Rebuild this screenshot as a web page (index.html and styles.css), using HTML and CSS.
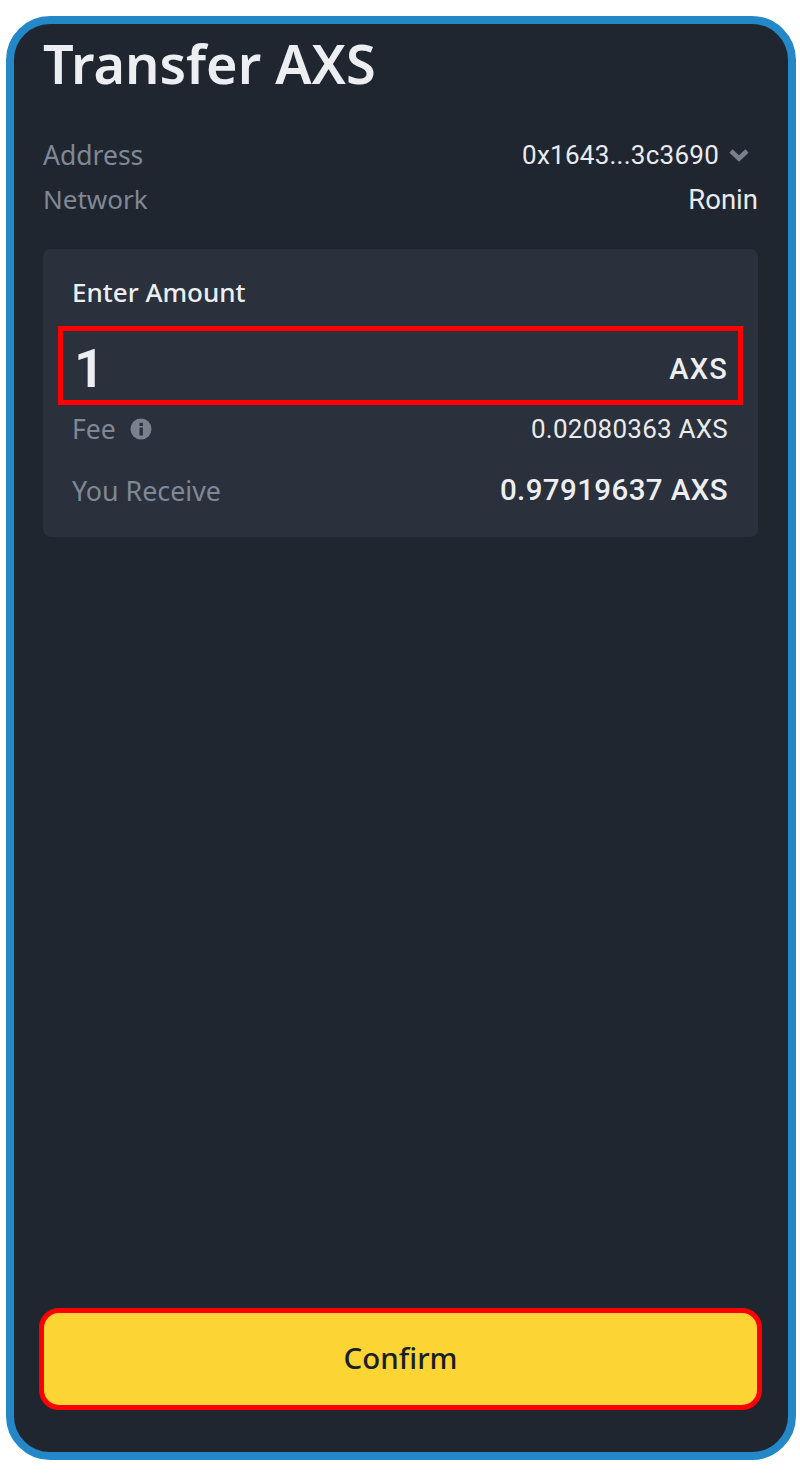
FILE: index.html
```html
<!DOCTYPE html>
<html lang="en">
<head>
    <meta charset="UTF-8">
    <meta name="viewport" content="width=device-width, initial-scale=1.0">
    <title>Transfer AXS</title>
    <link rel="stylesheet" href="styles.css">
</head>
<body>
    <div class="phone">
        <h1 class="title">Transfer AXS</h1>

        <!-- address and network -->
        <div class="info">
            <div class="info-row">
                <span class="label">Address</span>
                <span class="value address">0x1643...3c3690
                    <svg class="chevron" viewBox="0 0 20 14" width="20" height="14">
                        <path d="M2 3 L10 10.5 L18 3" fill="none" stroke="#79818f" stroke-width="4.6"/>
                    </svg>
                </span>
            </div>
            <div class="info-row">
                <span class="label network-label">Network</span>
                <span class="value network">Ronin</span>
            </div>
        </div>

        <!-- amount card -->
        <div class="card">
            <div class="card-title">Enter Amount</div>
            <div class="amount-box">
                <span class="amount">1</span>
                <span class="unit">AXS</span>
            </div>
            <div class="fee-row">
                <span class="label fee-label">Fee
                    <svg class="info-icon" viewBox="0 0 22 22" width="22" height="22">
                        <circle cx="11" cy="11" r="10.5" fill="#79818f"/>
                        <rect x="9.5" y="9.5" width="3.4" height="8" fill="#2a313c"/>
                        <rect x="9.5" y="4.8" width="3.4" height="3.2" fill="#2a313c"/>
                    </svg>
                </span>
                <span class="value">0.02080363 AXS</span>
            </div>
            <div class="receive-row">
                <span class="label receive-label">You Receive</span>
                <span class="receive">0.97919637 AXS</span>
            </div>
        </div>

        <button class="confirm">Confirm</button>
    </div>
</body>
</html>
```

FILE: styles.css
```css
* {
    margin: 0;
    padding: 0;
    box-sizing: border-box;
}

body {
    background: #fff;
    font-family: "Noto Sans", "Liberation Sans", sans-serif;
    height: 1474px;
    overflow: hidden;
    padding: 16px 4px 14px 6px;
}

.phone {
    display: flex;
    flex-direction: column;
    height: 100%;
    background: #1f2630;
    border: 8px solid #2487c7;
    border-radius: 44px;
    padding: 0 30px 42px 29px;
}

.title {
    color: #eceef2;
    font-size: 54px;
    font-weight: 600;
    line-height: 70px;
    margin-top: 4px;
}

/* address and network */
.info {
    margin-top: 35px;
}

.info-row {
    display: flex;
    align-items: center;
    justify-content: space-between;
    height: 44px;
}

.label {
    color: #808896;
    font-size: 26.5px;
}

.network-label {
    font-size: 26px;
}

.receive-label {
    font-size: 26.8px;
}

.value {
    color: #e9ebef;
    font-family: Roboto, "Liberation Sans", sans-serif;
    font-size: 26px;
    letter-spacing: 0.25px;
}

.network {
    font-size: 27.5px;
    letter-spacing: 0;
}

.address {
    display: flex;
    align-items: center;
    gap: 10px;
    padding-right: 9px;
}

/* amount card */
.card {
    margin-top: 28px;
    height: 288px;
    background: #2a313c;
    border-radius: 8px;
    padding: 26px 15px 0;
}

.card-title {
    color: #eceef2;
    font-size: 26px;
    font-weight: 500;
    line-height: 34px;
    padding-left: 14px;
}

.amount-box {
    display: flex;
    align-items: center;
    justify-content: space-between;
    height: 79px;
    margin-top: 17px;
    border: 5px solid #f00;
    padding: 6px 10px 0 11px;
}

.amount {
    color: #eceef2;
    font-family: Roboto, "Liberation Sans", sans-serif;
    font-size: 54px;
    font-weight: 600;
}

.unit {
    color: #eceef2;
    font-family: Roboto, "Liberation Sans", sans-serif;
    font-size: 29px;
    font-weight: 500;
    letter-spacing: 1.2px;
}

.fee-row,
.receive-row {
    display: flex;
    align-items: center;
    justify-content: space-between;
    padding: 0 15px 0 14px;
}

.fee-row {
    height: 48px;
}

.fee-label {
    display: flex;
    align-items: center;
    gap: 14px;
}

.receive-row {
    height: 74px;
}

.receive {
    color: #eceef2;
    font-family: Roboto, "Liberation Sans", sans-serif;
    font-size: 29.5px;
    font-weight: 500;
    letter-spacing: 0.4px;
}

/* button */
.confirm {
    margin: auto -4px 0 -4px;
    height: 102px;
    background: #fcd535;
    border: 5px solid #f00;
    border-radius: 20px;
    color: #1a1f27;
    font-family: "Noto Sans", "Liberation Sans", sans-serif;
    font-size: 29.5px;
    font-weight: 500;
    padding-bottom: 4px;
}
```
